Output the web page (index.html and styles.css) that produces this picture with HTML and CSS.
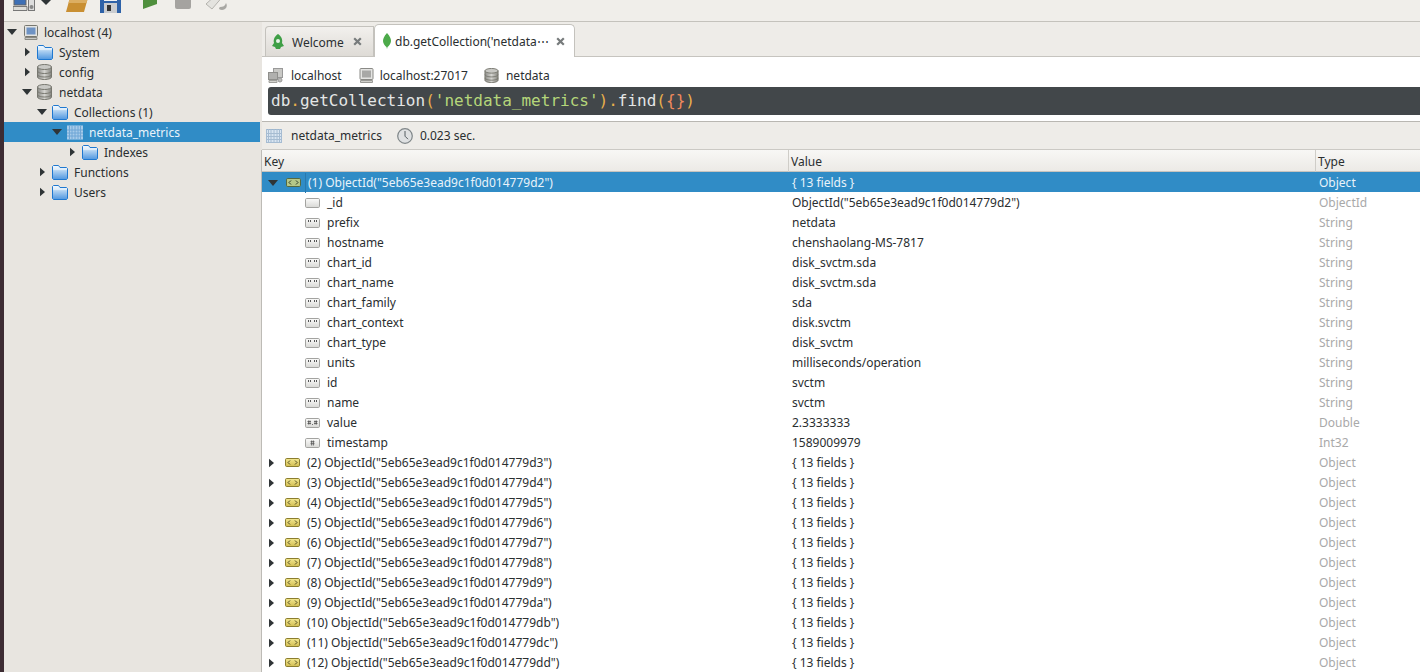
FILE: index.html
```html
<!DOCTYPE html>
<html lang="en">
<head>
<meta charset="utf-8">
<title>Robo 3T</title>
<link rel="stylesheet" href="styles.css">
</head>
<body>
<svg class="defs" width="0" height="0">
  <defs>
    <linearGradient id="gf" x1="0" y1="0" x2="0" y2="1"><stop offset="0" stop-color="#f2f8fd"/><stop offset=".33" stop-color="#dcebf9"/><stop offset=".36" stop-color="#b4d4f2"/><stop offset="1" stop-color="#4f97e0"/></linearGradient>
    <linearGradient id="gd" x1="0" y1="0" x2="1" y2="0"><stop offset="0" stop-color="#8c8c88"/><stop offset=".5" stop-color="#d4d4d0"/><stop offset="1" stop-color="#85857f"/></linearGradient>
    <linearGradient id="gk" x1="0" y1="0" x2="0" y2="1"><stop offset="0" stop-color="#f4e992"/><stop offset="1" stop-color="#d2bd52"/></linearGradient>
    <linearGradient id="gv" x1="0" y1="0" x2="0" y2="1"><stop offset="0" stop-color="#fbfbfa"/><stop offset="1" stop-color="#d8d8d5"/></linearGradient>
    <symbol id="down" viewBox="0 0 10 6"><path d="M0 0h10L5 6z" fill="#2f3436"/></symbol>
    <symbol id="right" viewBox="0 0 6 10"><path d="M0 0l6 5-6 5z" fill="#2f3436"/></symbol>
    <symbol id="folder" viewBox="0 0 16 15"><path d="M.5 3V1.500l1-1h5l1.500 2h6.500l1 1v10l-1 1h-13l-1-1z" fill="url(#gf)" stroke="#1f78d0"/></symbol>
    <symbol id="db" viewBox="0 0 15 16"><path d="M.5 3v10c0 1.400 3 2.500 7 2.500s7-1.100 7-2.500V3z" fill="url(#gd)" stroke="#77776f"/><ellipse cx="7.500" cy="3" rx="7" ry="2.500" fill="#c8c8c4" stroke="#77776f"/><path d="M.5 7c0 1.400 3 2.500 7 2.500s7-1.100 7-2.500M.5 10.500c0 1.400 3 2.500 7 2.500s7-1.100 7-2.500" fill="none" stroke="#77776f"/></symbol>
    <symbol id="monitor" viewBox="0 0 14 15"><rect x=".5" y=".5" width="13" height="11" rx="1" fill="#e4e4e2" stroke="#77776f"/><rect x="2.500" y="2.500" width="9" height="7" fill="#6f93c4"/><path d="M1 12.500h12v2H1z" fill="#c8c8c4" stroke="#8a8a84"/></symbol>
    <symbol id="monitor-grey" viewBox="0 0 14 15"><rect x=".5" y=".5" width="13" height="11" rx="1" fill="#e4e4e2" stroke="#8a8a86"/><rect x="2.500" y="2.500" width="9" height="7" fill="#a8a8a6"/><path d="M1 12.500h12v2H1z" fill="#d0d0cc" stroke="#9a9a96"/></symbol>
    <symbol id="network" viewBox="0 0 15 15"><rect x="5.500" y=".5" width="9" height="9" fill="#c9c9c6" stroke="#999"/><rect x=".5" y="4.500" width="9" height="7" fill="#b0b0ae" stroke="#8f8f8c"/><path d="M1 12.500h8v2H1z" fill="#d4d4d0" stroke="#a0a09c"/><circle cx="12" cy="12" r="2" fill="#bdbdba" stroke="#999"/></symbol>
    <symbol id="table" viewBox="0 0 16 14"><rect width="16" height="14" fill="#d9e5f1"/><path d="M0 .5h16" stroke="#9bb4cc"/><path d="M.5 0v14M15.500 0v14M5 0v14M8 0v14M11 0v14M2.500 0v14M13.500 0v14M0 4.500h16M0 7.500h16M0 10.500h16M0 13.500h16" stroke="#a6bcd2" stroke-width="1" fill="none"/></symbol>
    <symbol id="table-sel" viewBox="0 0 16 14"><rect width="16" height="14" fill="#a7cbe9"/><path d="M2.500 0v14M5 0v14M8 0v14M11 0v14M13.500 0v14M0 4.500h16M0 7.500h16M0 10.500h16" stroke="#6fa6d6" fill="none"/></symbol>
    <symbol id="clock" viewBox="0 0 16 16"><circle cx="8" cy="8" r="7.300" fill="#dfe1e2" stroke="#7f8688" stroke-width="1.200"/><path d="M8 3v5.200l3 3" fill="none" stroke="#555c60" stroke-width="1"/></symbol>
    <symbol id="obj" viewBox="0 0 15 9"><rect x=".5" y=".5" width="14" height="8" rx="1.200" fill="url(#gk)" stroke="#8b7d2e"/><path d="M5 2.500L3 4.500l2 2M10 2.500l2 2-2 2" fill="none" stroke="#4d4a22"/></symbol>
    <symbol id="obj-sel" viewBox="0 0 15 9"><rect x=".5" y=".5" width="14" height="8" rx="1.200" fill="#b5c788" stroke="#55693f"/><path d="M5 2.500L3 4.500l2 2M10 2.500l2 2-2 2" fill="none" stroke="#2c3a26"/></symbol>
    <symbol id="v-empty" viewBox="0 0 15 10"><rect x=".5" y=".5" width="14" height="9" rx="1.200" fill="url(#gv)" stroke="#a3a3a0"/></symbol>
    <symbol id="v-str" viewBox="0 0 15 10"><rect x=".5" y=".5" width="14" height="9" rx="1.200" fill="url(#gv)" stroke="#a3a3a0"/><path d="M3.500 2v2M5.500 2v2M9.500 2v2M11.500 2v2" stroke="#555"/></symbol>
    <symbol id="v-dbl" viewBox="0 0 15 10"><rect x=".5" y=".5" width="14" height="9" rx="1.200" fill="url(#gv)" stroke="#a3a3a0"/><path d="M2.500 3.500h3.500M2.500 5.500h3.500M3.500 2.500v4M5 2.500v4M9 3.500h3.500M9 5.500h3.500M10 2.500v4M11.500 2.500v4M7.500 6v1" stroke="#555" stroke-width=".8"/></symbol>
    <symbol id="v-int" viewBox="0 0 15 10"><rect x=".5" y=".5" width="14" height="9" rx="1.200" fill="url(#gv)" stroke="#a3a3a0"/><path d="M5.500 3.700h4M5.500 5.700h4M6.600 2.500v5M8.400 2.500v5" stroke="#555" stroke-width=".8"/></symbol>
    <symbol id="x" viewBox="0 0 9 9"><path d="M1.200 1.200l6.600 6.600M7.800 1.200L1.200 7.800" stroke="#777b7c" stroke-width="2.200"/></symbol>
  </defs>
</svg>
<div class="app">
  <div class="edge"></div>
  <div class="window">
    <header class="toolbar">
      <svg class="tb tb-conn" viewBox="0 0 23 18"><rect x="1" y="0" width="12" height="11" fill="#3d6fb5" stroke="#666"/><path d="M0 12.500h14v4H0z" fill="#dcdcd8" stroke="#777"/><rect x="15.500" y="4.500" width="6" height="12" fill="#ddd" stroke="#777"/><circle cx="18.500" cy="13" r="2" fill="#888"/></svg>
      <svg class="tb tb-arrow" viewBox="0 0 10 5"><path d="M0 0h10L5 5z" fill="#2f3436"/></svg>
      <svg class="tb tb-open" viewBox="0 0 23 18"><path d="M5 0h18l-5 18H0z" fill="#c98f32"/><path d="M5 0h18l-2.500 9H2.500z" fill="#dcae62"/></svg>
      <svg class="tb tb-save" viewBox="0 0 21 18"><path d="M0 0h21v18H0z" fill="#2e62a8"/><rect x="4" y="0" width="13" height="6" fill="#eef1f4"/><rect x="4" y="8" width="13" height="10" fill="#c9ccd0"/><rect x="7" y="10" width="4" height="6" fill="#333"/></svg>
      <svg class="tb tb-play" viewBox="0 0 14 14"><path d="M0 14V0h14v9z" fill="#4f8f3d"/></svg>
      <svg class="tb tb-stop" viewBox="0 0 16 14"><rect width="16" height="14" rx="2" fill="#a5a3a0"/></svg>
      <svg class="tb tb-tools" viewBox="0 0 24 18"><path d="M12 0h8L8 14 2 9z" fill="#e4e3df" stroke="#b4b3ae"/><path d="M16 12c3 0 5-1 6-4 2 3 0 7-4 7-2 0-3-1-3-2z" fill="#a8a7a3"/></svg>
    </header>
    <div class="workspace">
      <nav class="tree">
        <div class="node l0"><svg class="tw tw-d"><use href="#down"/></svg><svg class="ic ic-mon"><use href="#monitor"/></svg><span>localhost (4)</span></div>
        <div class="node l1"><svg class="tw tw-r"><use href="#right"/></svg><svg class="ic"><use href="#folder"/></svg><span>System</span></div>
        <div class="node l1"><svg class="tw tw-r"><use href="#right"/></svg><svg class="ic ic-db"><use href="#db"/></svg><span>config</span></div>
        <div class="node l1"><svg class="tw tw-d"><use href="#down"/></svg><svg class="ic ic-db"><use href="#db"/></svg><span>netdata</span></div>
        <div class="node l2"><svg class="tw tw-d"><use href="#down"/></svg><svg class="ic"><use href="#folder"/></svg><span>Collections (1)</span></div>
        <div class="node l3 node-sel"><svg class="tw tw-d"><use href="#down"/></svg><svg class="ic"><use href="#table-sel"/></svg><span>netdata_metrics</span></div>
        <div class="node l4"><svg class="tw tw-r"><use href="#right"/></svg><svg class="ic"><use href="#folder"/></svg><span>Indexes</span></div>
        <div class="node l2"><svg class="tw tw-r"><use href="#right"/></svg><svg class="ic"><use href="#folder"/></svg><span>Functions</span></div>
        <div class="node l2"><svg class="tw tw-r"><use href="#right"/></svg><svg class="ic"><use href="#folder"/></svg><span>Users</span></div>
      </nav>
      <main class="main">
        <div class="tabs">
          <div class="tab tab-welcome">
            <svg class="tab-logo" viewBox="0 0 14 16"><path d="M7 0c3 2 5 5 4 9l2 3-3 1-1 2H5l-1-2-3-1 2-3C2 5 4 2 7 0z" fill="#3f9f46"/><circle cx="7" cy="7" r="2" fill="#e8f3e8"/></svg>
            <span class="tab-title">Welcome</span>
            <svg class="tab-x"><use href="#x"/></svg>
          </div>
          <div class="tab tab-active">
            <svg class="tab-leaf" viewBox="0 0 8 16"><path d="M4 0c3 3 4 6 4 8s-2 5-3.500 6L4 16l-.5-2C2 13 0 10 0 8s1-5 4-8z" fill="#4caa4a"/></svg>
            <span class="tab-title">db.getCollection('netdata⋯</span>
            <svg class="tab-x"><use href="#x"/></svg>
          </div>
        </div>
        <section class="query">
          <div class="crumbs">
            <svg class="cr"><use href="#network"/></svg><span class="cr-t cr-t1">localhost</span>
            <svg class="cr cr-mon"><use href="#monitor-grey"/></svg><span class="cr-t cr-t2">localhost:27017</span>
            <svg class="cr cr-db"><use href="#db"/></svg><span class="cr-t">netdata</span>
          </div>
          <div class="editor"><span>db</span><span class="op">.</span><span>getCollection</span><span class="par">(</span><span class="str">'netdata_metrics'</span><span class="par">)</span><span class="op">.</span><span>find</span><span class="par">(</span><span class="brace">{}</span><span class="par">)</span></div>
        </section>
        <div class="result-bar">
          <svg class="rb-table"><use href="#table"/></svg><span class="rb-name">netdata_metrics</span>
          <svg class="rb-clock"><use href="#clock"/></svg><span>0.023 sec.</span>
        </div>
        <section class="grid">
          <div class="row head"><div class="c ck">Key</div><div class="c cv">Value</div><div class="c ct">Type</div></div>
          <div class="row row-sel"><div class="c ck p"><svg class="tw tw-d"><use href="#down"/></svg><svg class="ob"><use href="#obj-sel"/></svg><span class="key-sel">(1) ObjectId("5eb65e3ead9c1f0d014779d2")</span></div><div class="c cv">{ 13 fields }</div><div class="c ct">Object</div></div>
          <div class="row"><div class="c ck f"><svg class="vi"><use href="#v-empty"/></svg>_id</div><div class="c cv">ObjectId("5eb65e3ead9c1f0d014779d2")</div><div class="c ct">ObjectId</div></div>
          <div class="row"><div class="c ck f"><svg class="vi"><use href="#v-str"/></svg>prefix</div><div class="c cv">netdata</div><div class="c ct">String</div></div>
          <div class="row"><div class="c ck f"><svg class="vi"><use href="#v-str"/></svg>hostname</div><div class="c cv">chenshaolang-MS-7817</div><div class="c ct">String</div></div>
          <div class="row"><div class="c ck f"><svg class="vi"><use href="#v-str"/></svg>chart_id</div><div class="c cv">disk_svctm.sda</div><div class="c ct">String</div></div>
          <div class="row"><div class="c ck f"><svg class="vi"><use href="#v-str"/></svg>chart_name</div><div class="c cv">disk_svctm.sda</div><div class="c ct">String</div></div>
          <div class="row"><div class="c ck f"><svg class="vi"><use href="#v-str"/></svg>chart_family</div><div class="c cv">sda</div><div class="c ct">String</div></div>
          <div class="row"><div class="c ck f"><svg class="vi"><use href="#v-str"/></svg>chart_context</div><div class="c cv">disk.svctm</div><div class="c ct">String</div></div>
          <div class="row"><div class="c ck f"><svg class="vi"><use href="#v-str"/></svg>chart_type</div><div class="c cv">disk_svctm</div><div class="c ct">String</div></div>
          <div class="row"><div class="c ck f"><svg class="vi"><use href="#v-str"/></svg>units</div><div class="c cv">milliseconds/operation</div><div class="c ct">String</div></div>
          <div class="row"><div class="c ck f"><svg class="vi"><use href="#v-str"/></svg>id</div><div class="c cv">svctm</div><div class="c ct">String</div></div>
          <div class="row"><div class="c ck f"><svg class="vi"><use href="#v-str"/></svg>name</div><div class="c cv">svctm</div><div class="c ct">String</div></div>
          <div class="row"><div class="c ck f"><svg class="vi"><use href="#v-dbl"/></svg>value</div><div class="c cv">2.3333333</div><div class="c ct">Double</div></div>
          <div class="row"><div class="c ck f"><svg class="vi"><use href="#v-int"/></svg>timestamp</div><div class="c cv">1589009979</div><div class="c ct">Int32</div></div>
          <div class="row"><div class="c ck p"><svg class="tw tw-r"><use href="#right"/></svg><svg class="ob"><use href="#obj"/></svg>(2) ObjectId("5eb65e3ead9c1f0d014779d3")</div><div class="c cv">{ 13 fields }</div><div class="c ct">Object</div></div>
          <div class="row"><div class="c ck p"><svg class="tw tw-r"><use href="#right"/></svg><svg class="ob"><use href="#obj"/></svg>(3) ObjectId("5eb65e3ead9c1f0d014779d4")</div><div class="c cv">{ 13 fields }</div><div class="c ct">Object</div></div>
          <div class="row"><div class="c ck p"><svg class="tw tw-r"><use href="#right"/></svg><svg class="ob"><use href="#obj"/></svg>(4) ObjectId("5eb65e3ead9c1f0d014779d5")</div><div class="c cv">{ 13 fields }</div><div class="c ct">Object</div></div>
          <div class="row"><div class="c ck p"><svg class="tw tw-r"><use href="#right"/></svg><svg class="ob"><use href="#obj"/></svg>(5) ObjectId("5eb65e3ead9c1f0d014779d6")</div><div class="c cv">{ 13 fields }</div><div class="c ct">Object</div></div>
          <div class="row"><div class="c ck p"><svg class="tw tw-r"><use href="#right"/></svg><svg class="ob"><use href="#obj"/></svg>(6) ObjectId("5eb65e3ead9c1f0d014779d7")</div><div class="c cv">{ 13 fields }</div><div class="c ct">Object</div></div>
          <div class="row"><div class="c ck p"><svg class="tw tw-r"><use href="#right"/></svg><svg class="ob"><use href="#obj"/></svg>(7) ObjectId("5eb65e3ead9c1f0d014779d8")</div><div class="c cv">{ 13 fields }</div><div class="c ct">Object</div></div>
          <div class="row"><div class="c ck p"><svg class="tw tw-r"><use href="#right"/></svg><svg class="ob"><use href="#obj"/></svg>(8) ObjectId("5eb65e3ead9c1f0d014779d9")</div><div class="c cv">{ 13 fields }</div><div class="c ct">Object</div></div>
          <div class="row"><div class="c ck p"><svg class="tw tw-r"><use href="#right"/></svg><svg class="ob"><use href="#obj"/></svg>(9) ObjectId("5eb65e3ead9c1f0d014779da")</div><div class="c cv">{ 13 fields }</div><div class="c ct">Object</div></div>
          <div class="row"><div class="c ck p"><svg class="tw tw-r"><use href="#right"/></svg><svg class="ob"><use href="#obj"/></svg>(10) ObjectId("5eb65e3ead9c1f0d014779db")</div><div class="c cv">{ 13 fields }</div><div class="c ct">Object</div></div>
          <div class="row"><div class="c ck p"><svg class="tw tw-r"><use href="#right"/></svg><svg class="ob"><use href="#obj"/></svg>(11) ObjectId("5eb65e3ead9c1f0d014779dc")</div><div class="c cv">{ 13 fields }</div><div class="c ct">Object</div></div>
          <div class="row"><div class="c ck p"><svg class="tw tw-r"><use href="#right"/></svg><svg class="ob"><use href="#obj"/></svg>(12) ObjectId("5eb65e3ead9c1f0d014779dd")</div><div class="c cv">{ 13 fields }</div><div class="c ct">Object</div></div>
        </section>
      </main>
    </div>
  </div>
</div>
</body>
</html>
```
FILE: styles.css
```css
* { box-sizing: border-box; }
html, body { margin: 0; height: 100%; overflow: hidden; }
body { font: 12px/20px "Noto Sans", sans-serif; color: #2a2e30; background: #e8e5e0; }
.defs { position: absolute; }
.app { display: flex; height: 672px; }
.edge { flex: 0 0 4px; background: #3d2c33; }
.window { flex: 1; min-width: 0; display: flex; flex-direction: column; }

.toolbar { flex: 0 0 22px; display: flex; align-items: flex-end; padding: 0 0 9px 9px; background: #f0eeea; border-bottom: 1px solid #c4c2bc; overflow: hidden; }
.tb { flex: none; display: block; }
.tb-conn { width: 23px; height: 18px; }
.tb-arrow { width: 10px; height: 5px; margin-left: 5px; margin-bottom: 7px; }
.tb-open { width: 23px; height: 18px; margin-left: 15px; }
.tb-save { width: 21px; height: 18px; margin-left: 11px; margin-bottom: -1px; }
.tb-play { width: 14px; height: 14px; margin-left: 22px; margin-bottom: 3px; }
.tb-stop { width: 16px; height: 14px; margin-left: 18px; margin-bottom: 3px; }
.tb-tools { width: 24px; height: 18px; margin-left: 13px; margin-bottom: -1px; }

.workspace { flex: 1; min-height: 0; display: flex; }
.tree { flex: 0 0 256px; background: #e8e5e0; }
.node { height: 20px; display: flex; align-items: center; white-space: nowrap; padding-top: 2px; }
.node svg { margin-top: -2px; }
.node .ic { flex: none; width: 16px; height: 15px; margin-right: 6px; }
.node .ic-mon { width: 14px; margin-left: 2px; margin-right: 6px; }
.node .ic-db { width: 15px; height: 16px; margin-right: 7px; }
.tw { flex: none; display: block; }
.tw-d { width: 10px; height: 6px; }
.tw-r { width: 5px; height: 10px; }
.node .tw-d { margin-right: 5px; }
.node .tw-r { margin-left: 3px; margin-right: 7px; }
.l0 { padding-left: 3px; }
.l1 { padding-left: 18px; }
.l2 { padding-left: 33px; }
.l3 { padding-left: 48px; }
.l4 { padding-left: 63px; }
.node-sel { background: #308cc6; color: #e9f3fa; }

.main { flex: 0 0 1160px; margin-left: 2px; display: flex; flex-direction: column; min-width: 0; background: #fff; }
.tabs { flex: 0 0 35px; display: flex; align-items: flex-end; padding: 0 0 0 3px; background: #eeece8; border-bottom: 1px solid #c6c4bf; }
.tab { display: flex; align-items: center; margin-bottom: -1px; padding-top: 2px; }
.tab svg { margin-top: -2px; }
.tab-welcome { width: 109px; height: 31px; padding-left: 5px; background: linear-gradient(#f2f0ed, #dedbd6); border: 1px solid #c4c2bd; border-bottom-color: #c6c4bf; border-radius: 4px 0 0 0; }
.tab-active { width: 201px; height: 33px; padding-left: 8px; background: #fff; border: 1px solid #c4c2bd; border-bottom: 0; border-radius: 5px 5px 0 0; }
.tab-logo { flex: none; width: 14px; height: 16px; margin-right: 7px; }
.tab-leaf { flex: none; width: 8px; height: 16px; margin-right: 4px; }
.tab-title { flex: 1; white-space: nowrap; }
.tab-x { flex: none; width: 9px; height: 9px; margin-right: 9px; }
.tab-welcome .tab-x { margin-right: 11px; }

.query { flex: 0 0 65px; padding: 0 0 0 6px; background: #fff; border-bottom: 1px solid #b9b7b2; }
.crumbs { height: 30px; padding-top: 8px; display: flex; align-items: center; }
.cr { flex: none; width: 15px; height: 15px; margin-top: -2px; margin-right: 8px; }
.cr-mon { margin-right: 6px; }
.cr-db { margin-right: 7px; }
.cr-t1 { margin-right: 17px; }
.cr-t2 { margin-right: 16px; }
.editor { height: 28px; background: #42474a; border-radius: 3px 0 0 3px; padding-left: 3px; color: #e4e6e6; font: 16px/28px "DejaVu Sans Mono", monospace; white-space: nowrap; }
.op { color: #e8b04c; }
.par { color: #e8b04c; }
.str { color: #b5d67a; }
.brace { color: #f08a5d; }

.result-bar { flex: 0 0 28px; display: flex; align-items: center; padding-left: 4px; background: #eeece8; border-bottom: 1px solid #cbc9c4; }
.rb-table { flex: none; width: 16px; height: 14px; margin-right: 9px; }
.rb-name { margin-right: 15px; }
.rb-clock { flex: none; width: 16px; height: 16px; margin-right: 7px; }

.grid { flex: 1; min-height: 0; overflow: hidden; border-left: 1px solid #bdbbb6; margin-left: -1px; }
.row { display: grid; grid-template-columns: 527px 527px 1fr; height: 20px; white-space: nowrap; }
.c { display: flex; align-items: center; padding-left: 3px; padding-top: 1px; min-width: 0; }
.c svg { margin-top: -1px; }
.ct { color: #a9a9a9; }
.head { height: 22px; background: linear-gradient(#f8f7f5, #eceae6); border-bottom: 1px solid #c6c4bf; }
.head .c { padding-left: 2px; padding-top: 2px; border-right: 1px solid #cfcdc8; color: #2a2e30; }
.head .ct { border-right: 0; }
.p { padding-left: 6px; }
.p .tw-d { margin-right: 8px; }
.p .tw-r { margin: 0 11px 0 1px; }
.ob { flex: none; width: 15px; height: 9px; margin-right: 7px; }
.f { padding-left: 43px; }
.vi { flex: none; width: 15px; height: 10px; margin-right: 7px; }
.row-sel { background: #308cc6; color: #e9f3fa; }
.row-sel .ct { color: #e9f3fa; }
.key-sel { margin-left: -3px; padding-left: 2px; border-left: 1px solid #2878ae; flex: 1; }
```
